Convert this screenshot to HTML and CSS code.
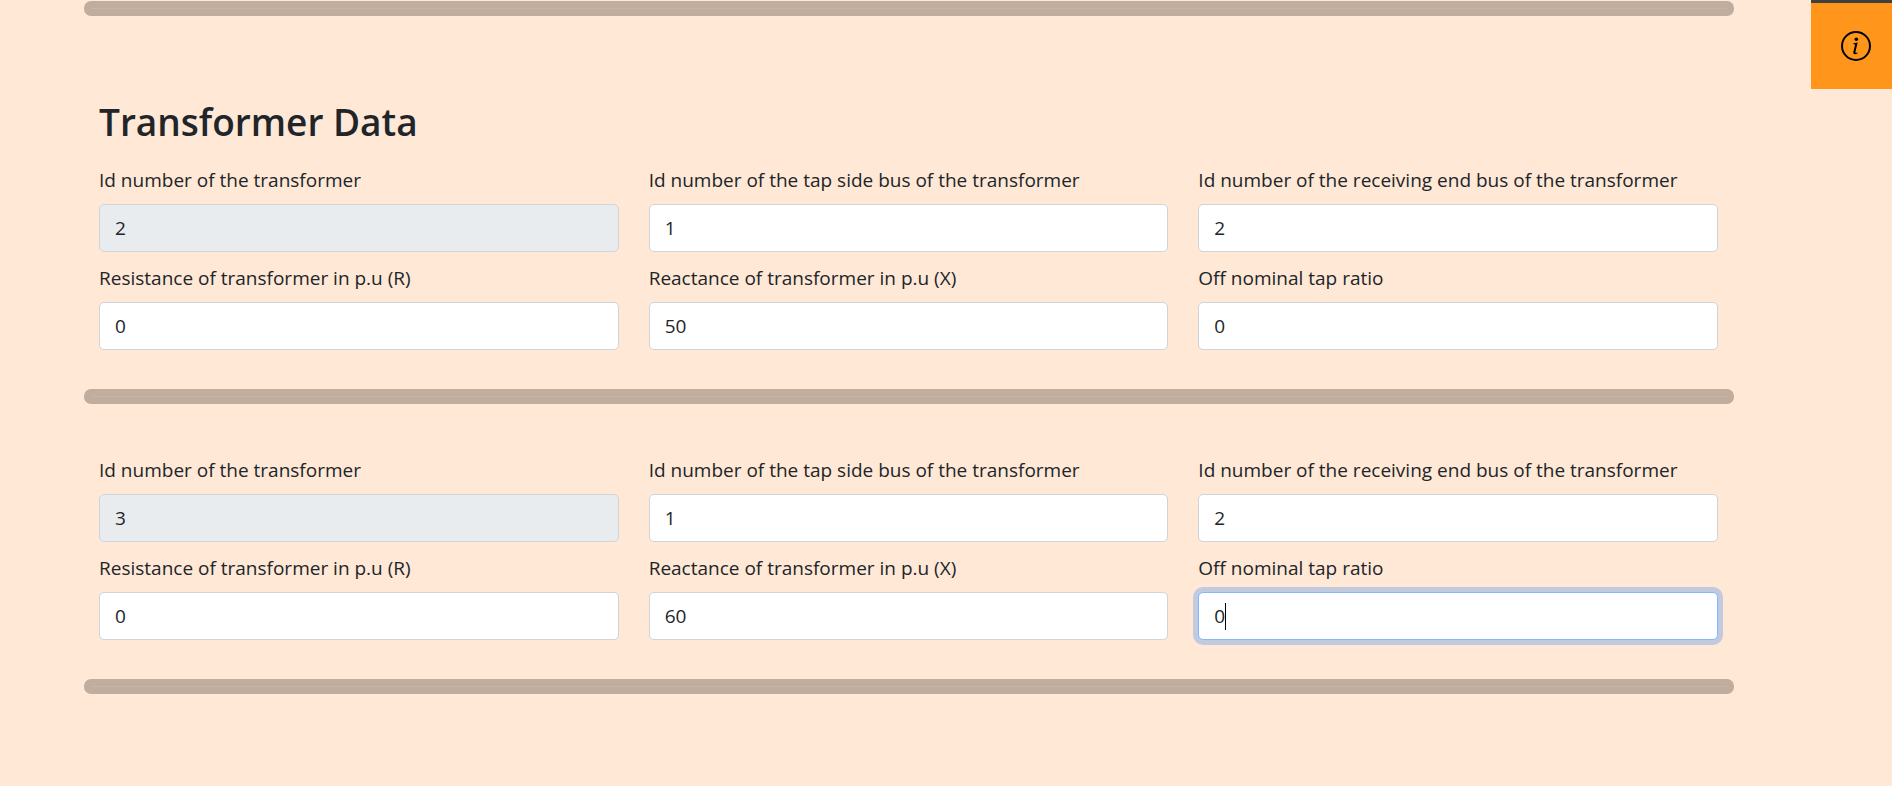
FILE: index.html
```html
<!DOCTYPE html>
<html lang="en">
<head>
<meta charset="utf-8">
<meta name="viewport" content="width=device-width, initial-scale=1">
<title>Transformer Data</title>
<link rel="stylesheet" href="styles.css">
</head>
<body>
<div class="page">
  <main class="content">
    <hr class="divider">
    <form class="transformers">
      <h1 class="title">Transformer Data</h1>
      <div class="group">
        <div class="field"><label for="id-1">Id number of the transformer</label><input id="id-1" class="control" type="text" value="2" readonly></div>
        <div class="field"><label for="tap-1">Id number of the tap side bus of the transformer</label><input id="tap-1" class="control" type="text" value="1"></div>
        <div class="field"><label for="end-1">Id number of the receiving end bus of the transformer</label><input id="end-1" class="control" type="text" value="2"></div>
        <div class="field"><label for="r-1">Resistance of transformer in p.u (R)</label><input id="r-1" class="control" type="text" value="0"></div>
        <div class="field"><label for="x-1">Reactance of transformer in p.u (X)</label><input id="x-1" class="control" type="text" value="50"></div>
        <div class="field"><label for="ratio-1">Off nominal tap ratio</label><input id="ratio-1" class="control" type="text" value="0"></div>
      </div>
      <hr class="divider">
      <div class="group group-next">
        <div class="field"><label for="id-2">Id number of the transformer</label><input id="id-2" class="control" type="text" value="3" readonly></div>
        <div class="field"><label for="tap-2">Id number of the tap side bus of the transformer</label><input id="tap-2" class="control" type="text" value="1"></div>
        <div class="field"><label for="end-2">Id number of the receiving end bus of the transformer</label><input id="end-2" class="control" type="text" value="2"></div>
        <div class="field"><label for="r-2">Resistance of transformer in p.u (R)</label><input id="r-2" class="control" type="text" value="0"></div>
        <div class="field"><label for="x-2">Reactance of transformer in p.u (X)</label><input id="x-2" class="control" type="text" value="60"></div>
        <div class="field field-active"><label for="ratio-2">Off nominal tap ratio</label><input id="ratio-2" class="control control-active" type="text" value="0"><span class="caret"></span></div>
      </div>
      <hr class="divider">
    </form>
  </main>
  <aside class="side">
    <button class="info" type="button" aria-label="Information">
      <svg width="30" height="30" viewBox="0 0 30 30" aria-hidden="true">
        <circle cx="15" cy="15" r="14" fill="none" stroke="#000" stroke-width="2"/>
        <circle cx="15.3" cy="8.3" r="1.8"/>
        <path d="M12.4 12.2 16.7 11.5 14.5 20.6Q14.2 22 15 22 15.7 22 16.6 21.3L16.3 22.4Q15.3 23.2 14 23.2 11.8 23.2 12.4 20.8L13.9 14.4Q14.1 13.3 13.4 13.2L12.2 13Z"/>
      </svg>
    </button>
  </aside>
</div>
</body>
</html>
```
FILE: styles.css
```css
* { box-sizing: border-box; }

body {
  margin: 0;
  background: #ffe8d6;
  color: #212529;
  font-family: "Open Sans", "Noto Sans", sans-serif;
  font-size: 19px;
  line-height: 30px;
}

.page { display: flex; align-items: flex-start; }

.content {
  flex: 1;
  min-width: 0;
  padding: 1px 77px 80px 84px;
}

.divider {
  box-sizing: content-box;
  height: 1px;
  margin: 0;
  border: 7px solid #c0ad9e;
  border-radius: 7px;
  background: #c7b4a5;
}

.title {
  margin: 0;
  padding: 82px 15px 19px;
  font-size: 37px;
  font-weight: 600;
  line-height: 48px;
}

.group {
  display: grid;
  grid-template-columns: repeat(3, minmax(0, 1fr));
  gap: 11px 30px;
  padding: 0 16px 39px 15px;
}

.group-next { padding-top: 51px; }

.field {
  display: flex;
  flex-direction: column;
  gap: 9px;
}

.control {
  width: 100%;
  height: 48px;
  padding: 8px 15px;
  border: 1px solid #ced4da;
  border-radius: 5px;
  background: #fff;
  color: #212529;
  font: inherit;
  outline: none;
}

.control:read-only { background: #e9ecef; }

.control-active {
  border-color: #86b7fe;
  box-shadow: 0 0 0 5px #c2cae0;
}

.field-active { position: relative; }

.caret {
  position: absolute;
  left: 27px;
  bottom: 10px;
  width: 1px;
  height: 27px;
  background: #000;
}

.side { flex: 0 0 81px; }

.info {
  display: flex;
  align-items: center;
  justify-content: center;
  width: 100%;
  height: 89px;
  padding: 0 0 0 8px;
  border: 0;
  border-top: 3px solid #42403f;
  background: #ff961b;
}
```
